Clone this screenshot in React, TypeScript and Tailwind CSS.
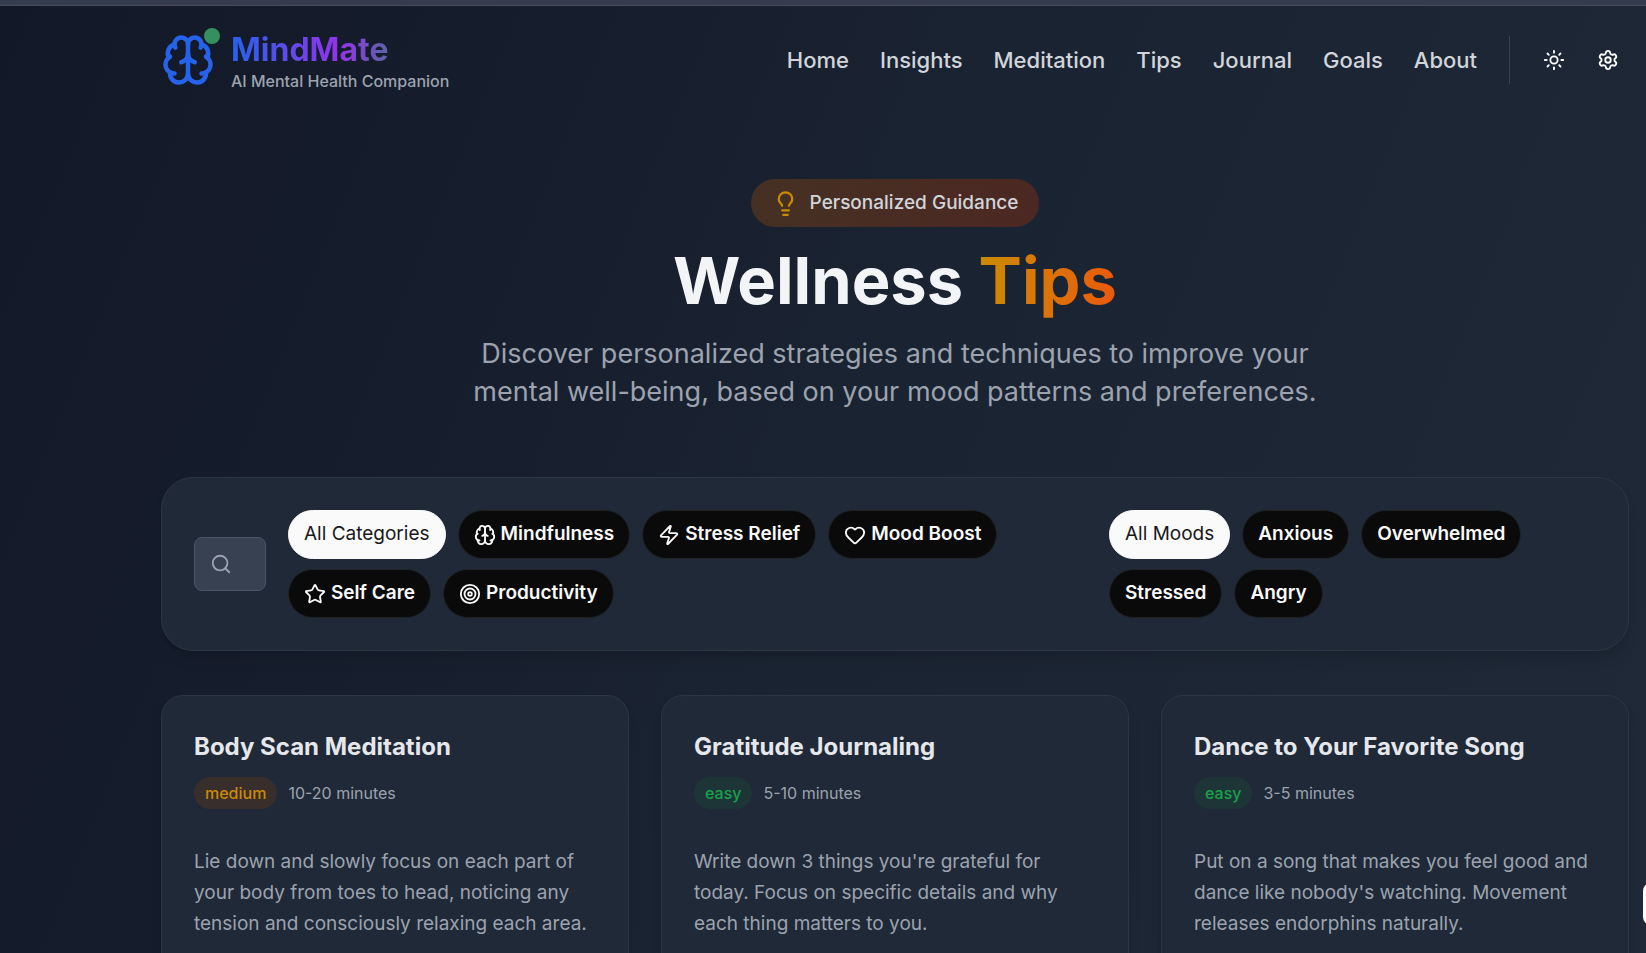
import type { ReactNode } from "react";
import { Brain, Heart, Lightbulb, Search, Settings, Star, Sun, Target, Zap } from "lucide-react";

const navItems = ["Home", "Insights", "Meditation", "Tips", "Journal", "Goals", "About"];

const categories = [
  { label: "All Categories", active: true },
  { label: "Mindfulness", icon: Brain },
  { label: "Stress Relief", icon: Zap },
  { label: "Mood Boost", icon: Heart },
  { label: "Self Care", icon: Star },
  { label: "Productivity", icon: Target },
];

const moods = [
  { label: "All Moods", active: true },
  { label: "Anxious" },
  { label: "Overwhelmed" },
  { label: "Stressed" },
  { label: "Angry" },
];

const tips = [
  {
    title: "Body Scan Meditation",
    level: "medium",
    time: "10-20 minutes",
    text: "Lie down and slowly focus on each part of your body from toes to head, noticing any tension and consciously relaxing each area.",
  },
  {
    title: "Gratitude Journaling",
    level: "easy",
    time: "5-10 minutes",
    text: "Write down 3 things you're grateful for today. Focus on specific details and why each thing matters to you.",
  },
  {
    title: "Dance to Your Favorite Song",
    level: "easy",
    time: "3-5 minutes",
    text: "Put on a song that makes you feel good and dance like nobody's watching. Movement releases endorphins naturally.",
  },
];

function Chip({ active, children }: { active?: boolean; children: ReactNode }) {
  return (
    <button
      type="button"
      aria-pressed={!!active}
      className={
        active
          ? "flex h-[49px] items-center rounded-full border border-[#fafafa] bg-[#fafafa] px-[15px] text-[19px] text-[#18181b]"
          : "flex h-[49px] items-center gap-[5px] rounded-full border border-[#1f2326] bg-[#0a0a0a] px-[15px] text-[19px] font-semibold text-[#fafafa]"
      }
    >
      {children}
    </button>
  );
}

export default function App() {
  return (
    <div className="relative h-screen overflow-hidden bg-[linear-gradient(112deg,#121827_0%,#151c2b_22%,#1a2331_50%,#1f2937_100%)] font-['Inter',sans-serif]">
      <div className="h-1.5 border-b border-[#4a4d55] bg-[#363c50]" />
      <header className="flex h-[108px] items-center justify-between pr-[14px] pl-[161px]">
        <a href="#" className="flex items-center gap-4">
          <span className="relative">
            <Brain className="size-[54px] text-[#2563eb]" />
            <span className="absolute -top-[5px] -right-[5px] size-4 rounded-full bg-[#358f5e]" />
          </span>
          <span className="flex flex-col pt-1">
            <span className="bg-linear-to-r/srgb from-[#2563eb] via-[#9333ea] to-[#16a34a] bg-clip-text text-[32px] leading-[38px] font-bold text-transparent">
              MindMate
            </span>
            <span className="text-base leading-6 font-medium text-[#9ca3af]">AI Mental Health Companion</span>
          </span>
        </a>
        <div className="flex items-center">
          <nav className="flex gap-[31px]">
            {navItems.map((item) => (
              <a key={item} href="#" className="text-[22px] leading-8 font-medium text-[#d1d5db]">
                {item}
              </a>
            ))}
          </nav>
          <div className="ml-8 flex h-12 items-center gap-1.5 border-l border-[#374151] pl-5">
            <button type="button" aria-label="Toggle theme" className="flex size-12 items-center justify-center text-white">
              <Sun className="size-[22px]" />
            </button>
            <button type="button" aria-label="Settings" className="flex size-12 items-center justify-center text-white">
              <Settings className="size-[22px]" />
            </button>
          </div>
        </div>
      </header>

      <main className="pr-[17px] pl-[161px]">
        <section className="flex flex-col items-center pt-[65px] text-center">
          <div className="flex h-12 items-center gap-[11px] rounded-full bg-linear-to-r from-[#453023] to-[#4c2823] px-[21px]">
            <Lightbulb className="size-[27px] text-[#ca8a04]" />
            <span className="text-[19px] font-medium text-[#d1d5db]">Personalized Guidance</span>
          </div>
          <h1 className="mt-5 text-[65px] leading-[68px] font-bold text-[#f3f4f6]">
            Wellness{" "}
            <span className="bg-linear-to-r from-[#ca8a04] to-[#ea580c] bg-clip-text text-transparent">Tips</span>
          </h1>
          <p className="mt-5 max-w-[896px] text-[27px] leading-[38px] text-[#9ca3af]">
            Discover personalized strategies and techniques to improve your mental well-being, based on your mood
            patterns and preferences.
          </p>
        </section>

        <section className="mt-[66px] flex items-center rounded-[32px] border border-[#2c3745] bg-[#1f2937] p-8 shadow-lg">
          <div className="relative w-[72px] shrink-0">
            <Search className="absolute top-4 left-4 size-[22px] text-[#9ca3af]" />
            <input
              type="text"
              aria-label="Search tips"
              className="h-[54px] w-full rounded-lg border border-[#4b5563] bg-[#374151] pl-12 text-[19px] text-white"
            />
          </div>
          <div className="ml-[22px] flex flex-1 flex-wrap gap-x-3 gap-y-2.5">
            {categories.map(({ label, active, icon: Icon }) => (
              <Chip key={label} active={active}>
                {Icon && <Icon className="size-[22px]" />}
                {label}
              </Chip>
            ))}
          </div>
          <div className="ml-[22px] flex w-[487px] shrink-0 flex-wrap gap-x-3 gap-y-2.5">
            {moods.map(({ label, active }) => (
              <Chip key={label} active={active}>
                {label}
              </Chip>
            ))}
          </div>
        </section>

        <section className="mt-11 grid grid-cols-3 gap-8">
          {tips.map((tip) => (
            <article key={tip.title} className="rounded-[22px] border border-[#2c3745] bg-[#1f2937] px-8 pt-8 pb-16 shadow-lg">
              <h2 className="text-2xl leading-[38px] font-bold text-[#e5e7eb]">{tip.title}</h2>
              <div className="mt-[11px] flex items-center gap-[11px]">
                <span
                  className={
                    tip.level === "medium"
                      ? "rounded-full bg-[#382e2b] px-[11px] text-base leading-8 font-medium text-[#ca8a04]"
                      : "rounded-full bg-[#1e3538] px-[11px] text-base leading-8 font-medium text-[#16a34a]"
                  }
                >
                  {tip.level}
                </span>
                <span className="text-base text-[#9ca3af]">{tip.time}</span>
              </div>
              <p className="mt-[37px] text-[19px] leading-[31px] text-[#9ca3af]">{tip.text}</p>
            </article>
          ))}
        </section>
      </main>

      <button
        type="button"
        aria-label="Open assistant"
        className="absolute right-[-39px] bottom-7 size-[42px] rounded-lg bg-white"
      />
    </div>
  );
}
